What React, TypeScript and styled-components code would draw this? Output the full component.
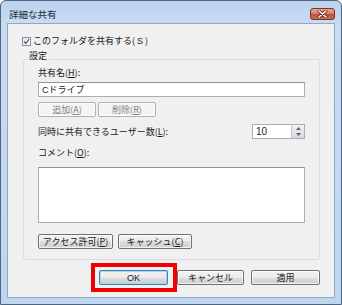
import React from 'react';
import styled, { createGlobalStyle } from 'styled-components';

const GlobalStyle = createGlobalStyle`
  html, body {
    margin: 0;
    padding: 0;
    background: #ffffff;
  }
  * {
    box-sizing: border-box;
  }
`;

const Window = styled.div`
  width: 342px;
  height: 305px;
  border: 1px solid #4f6682;
  border-radius: 6px 6px 0 0;
  background: linear-gradient(180deg, #bcd3ee 0px, #c8dcf3 22px, #bfd5ef 100%);
  display: flex;
  flex-direction: column;
  font-family: 'Noto Sans CJK JP', 'Noto Sans', sans-serif;
  font-size: 9px;
  color: #1a1a1a;
`;

const TitleBar = styled.div`
  height: 22px;
  display: flex;
  align-items: flex-start;
  justify-content: space-between;
  padding: 0 6px 0 8px;
`;

const Title = styled.span`
  margin-top: 7px;
  font-size: 9.5px;
  line-height: 12px;
  color: #1c2a3a;
`;

const CloseButton = styled.div`
  width: 25px;
  height: 12px;
  margin-top: 7px;
  border: 1px solid #7a3226;
  border-radius: 3px;
  background: linear-gradient(180deg, #e8a898 0%, #d9806c 45%, #c8503a 55%, #d26a52 100%);
  display: flex;
  align-items: center;
  justify-content: center;
`;

const Client = styled.div`
  flex: 1;
  margin: 0 6px 6px 6px;
  border: 1px solid #93a9c2;
  background: #f0f0f0;
  display: flex;
  flex-direction: column;
  padding: 0 14px 0 14px;
`;

const CheckRow = styled.label`
  display: flex;
  align-items: center;
  gap: 2px;
  margin-top: 11px;
  line-height: 12px;
`;

const CheckBox = styled.span`
  width: 9px;
  height: 9px;
  border: 1px solid #8f8f8f;
  background: linear-gradient(135deg, #e6e6e6, #ffffff);
  display: inline-flex;
  align-items: center;
  justify-content: center;
`;

const Group = styled.div`
  margin: 12px 0 0 1px;
  width: 297px;
  border: 1px solid #d5dfe5;
  border-radius: 3px;
  padding: 0 14px 10px 14px;
  display: flex;
  flex-direction: column;
`;

const GroupLabel = styled.span`
  align-self: flex-start;
  margin: -10px 0 0 -11px;
  padding: 0 2px;
  background: #f0f0f0;
  line-height: 12px;
`;

const FieldLabel = styled.span<{ $top: number }>`
  margin-top: ${(p) => p.$top}px;
  line-height: 12px;
`;

const TextBox = styled.div<{ $top: number; $height: number }>`
  margin-top: ${(p) => p.$top}px;
  height: ${(p) => p.$height}px;
  border: 1px solid #abadb3;
  border-top-color: #8f949b;
  background: #ffffff;
  padding: 1px 3px;
  line-height: 12px;
`;

const ButtonRow = styled.div<{ $top: number; $gap: number }>`
  display: flex;
  gap: ${(p) => p.$gap}px;
  margin-top: ${(p) => p.$top}px;
`;

const Button = styled.div<{ $width: number; $left?: number; $disabled?: boolean; $default?: boolean }>`
  width: ${(p) => p.$width}px;
  height: 15px;
  margin-left: ${(p) => p.$left ?? 0}px;
  border: 1px solid ${(p) => (p.$disabled ? '#adb2b5' : p.$default ? '#3c7fb1' : '#707070')};
  border-radius: 2px;
  background: ${(p) =>
    p.$disabled
      ? '#f4f4f4'
      : 'linear-gradient(180deg, #f2f2f2 0%, #ebebeb 50%, #dddddd 50%, #cfcfcf 100%)'};
  box-shadow: inset 0 0 0 1px ${(p) => (p.$default ? '#9fdcf7' : 'rgba(255,255,255,0.7)')};
  color: ${(p) => (p.$disabled ? '#838383' : '#1a1a1a')};
  display: flex;
  align-items: center;
  justify-content: center;
  line-height: 12px;
  position: relative;
`;

const SpinRow = styled.div`
  display: flex;
  align-items: center;
  justify-content: space-between;
  margin-top: 7px;
  height: 15px;
`;

const Spinner = styled.div`
  width: 53px;
  height: 15px;
  display: flex;
  border: 1px solid #abadb3;
  background: #ffffff;
`;

const SpinValue = styled.span`
  flex: 1;
  padding-left: 3px;
  line-height: 13px;
  font-size: 10px;
  font-family: 'Liberation Sans', sans-serif;
`;

const SpinButtons = styled.div`
  width: 13px;
  display: flex;
  flex-direction: column;
  border-left: 1px solid #c8c8c8;
  background: linear-gradient(180deg, #f2f2f2, #d8d8d8);
`;

const SpinArrow = styled.div`
  flex: 1;
  display: flex;
  align-items: center;
  justify-content: center;
`;

const Footer = styled.div`
  display: flex;
  margin: 10px 0 0 77px;
`;

const Highlight = styled.span`
  position: absolute;
  top: -8px;
  bottom: -8px;
  left: -9px;
  right: -10px;
  border: 4px solid #f00000;
  pointer-events: none;
`;

const Latin = styled.span`
  font-family: 'Liberation Sans', sans-serif;
`;

const Hot = styled.span`
  text-decoration: underline;
`;

const App: React.FC = () => {
  return (
    <>
      <GlobalStyle />
      <Window>
        <TitleBar>
          <Title>詳細な共有</Title>
          <CloseButton>
            <svg width="11" height="8" viewBox="0 0 11 8">
              <path d="M2 1 L9 7 M9 1 L2 7" stroke="#5a2018" strokeWidth="3" strokeLinecap="round" />
              <path d="M2 1 L9 7 M9 1 L2 7" stroke="#ffffff" strokeWidth="1.6" strokeLinecap="round" />
            </svg>
          </CloseButton>
        </TitleBar>
        <Client>
          <CheckRow>
            <CheckBox>
              <svg width="7" height="7" viewBox="0 0 7 7">
                <path d="M1 3.5 L3 5.5 L6 1" stroke="#3b57a0" strokeWidth="1.3" fill="none" />
              </svg>
            </CheckBox>
            このフォルダを共有する(<Latin>S</Latin>)
          </CheckRow>
          <Group>
            <GroupLabel>設定</GroupLabel>
            <FieldLabel $top={5}>
              共有名(<Hot>H</Hot>):
            </FieldLabel>
            <TextBox $top={3} $height={15}>
              <Latin>C</Latin>ドライブ
            </TextBox>
            <ButtonRow $top={5} $gap={2}>
              <Button $width={58} $disabled>
                追加(<Hot>A</Hot>)
              </Button>
              <Button $width={58} $disabled>
                削除(<Hot>R</Hot>)
              </Button>
            </ButtonRow>
            <SpinRow>
              <span>
                同時に共有できるユーザー数(<Hot>L</Hot>):
              </span>
              <Spinner>
                <SpinValue>10</SpinValue>
                <SpinButtons>
                  <SpinArrow>
                    <svg width="5" height="3" viewBox="0 0 5 3">
                      <path d="M0 3 L2.5 0 L5 3 Z" fill="#4d6185" />
                    </svg>
                  </SpinArrow>
                  <SpinArrow>
                    <svg width="5" height="3" viewBox="0 0 5 3">
                      <path d="M0 0 L2.5 3 L5 0 Z" fill="#4d6185" />
                    </svg>
                  </SpinArrow>
                </SpinButtons>
              </Spinner>
            </SpinRow>
            <FieldLabel $top={8}>
              コメント(<Hot>O</Hot>):
            </FieldLabel>
            <TextBox $top={8} $height={56} />
            <ButtonRow $top={11} $gap={5}>
              <Button $width={75}>
                アクセス許可(<Hot>P</Hot>)
              </Button>
              <Button $width={74}>
                キャッシュ(<Hot>C</Hot>)
              </Button>
            </ButtonRow>
          </Group>
          <Footer>
            <Button $width={69} $default>
              <Latin>OK</Latin>
              <Highlight />
            </Button>
            <Button $width={67} $left={9}>
              キャンセル
            </Button>
            <Button $width={69} $left={7}>
              適用
            </Button>
          </Footer>
        </Client>
      </Window>
    </>
  );
};

export default App;
